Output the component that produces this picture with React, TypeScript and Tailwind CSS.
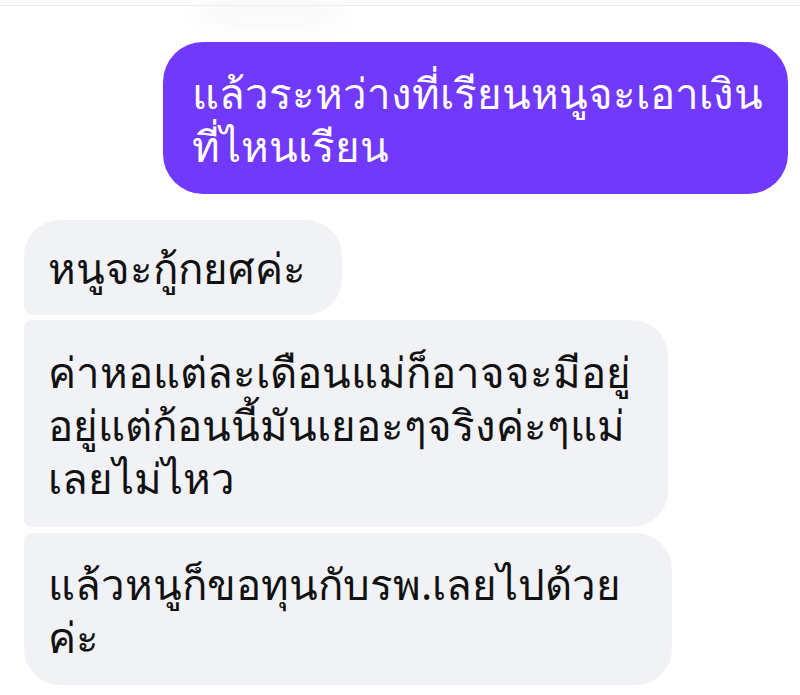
export default function App() {
  const font = { fontFamily: '"Noto Sans", "DejaVu Sans", sans-serif' }
  return (
    <div className="w-[800px] h-[695px] bg-white overflow-hidden relative" style={font}>
      <div className="h-[6px] border-b border-[#ececef]" />
      <div className="absolute left-[200px] top-[4px] w-[140px] h-[14px] rounded-full bg-[#f2f2f2] blur-md" />
      <div className="flex flex-col pt-[36px] pl-[24px] pr-[12px]">
        <div className="self-end w-[625px] bg-[#7139fb] text-white rounded-[40px] pl-[29px] pr-[16px] pt-[24px] pb-[22px] text-[42px] leading-[53px] whitespace-nowrap">
          แล้วระหว่างที่เรียนหนูจะเอาเงิน<br />ที่ไหนเรียน
        </div>
        <div className="mt-[26px] flex flex-col items-start">
          <div className="w-[318px] bg-[#f1f2f5] text-[#111] rounded-[36px] rounded-bl-[8px] pl-[24px] pt-[21px] pb-[21px] text-[42px] leading-[53px] whitespace-nowrap">
            หนูจะกู้กยศค่ะ
          </div>
          <div className="mt-[5px] w-[644px] bg-[#f1f2f5] text-[#111] rounded-[36px] rounded-tl-[8px] rounded-bl-[8px] pl-[24px] pt-[25px] pb-[23px] text-[42px] leading-[53px] whitespace-nowrap">
            ค่าหอแต่ละเดือนแม่ก็อาจจะมีอยู่<br />อยู่แต่ก้อนนี้มันเยอะๆจริงค่ะๆแม่<br />เลยไม่ไหว
          </div>
          <div className="mt-[6px] w-[648px] bg-[#f1f2f5] text-[#111] rounded-[36px] rounded-tl-[8px] pl-[24px] pt-[24px] pb-[22px] text-[42px] leading-[53px] whitespace-nowrap">
            แล้วหนูก็ขอทุนกับรพ.เลยไปด้วย<br />ค่ะ
          </div>
        </div>
      </div>
    </div>
  )
}
